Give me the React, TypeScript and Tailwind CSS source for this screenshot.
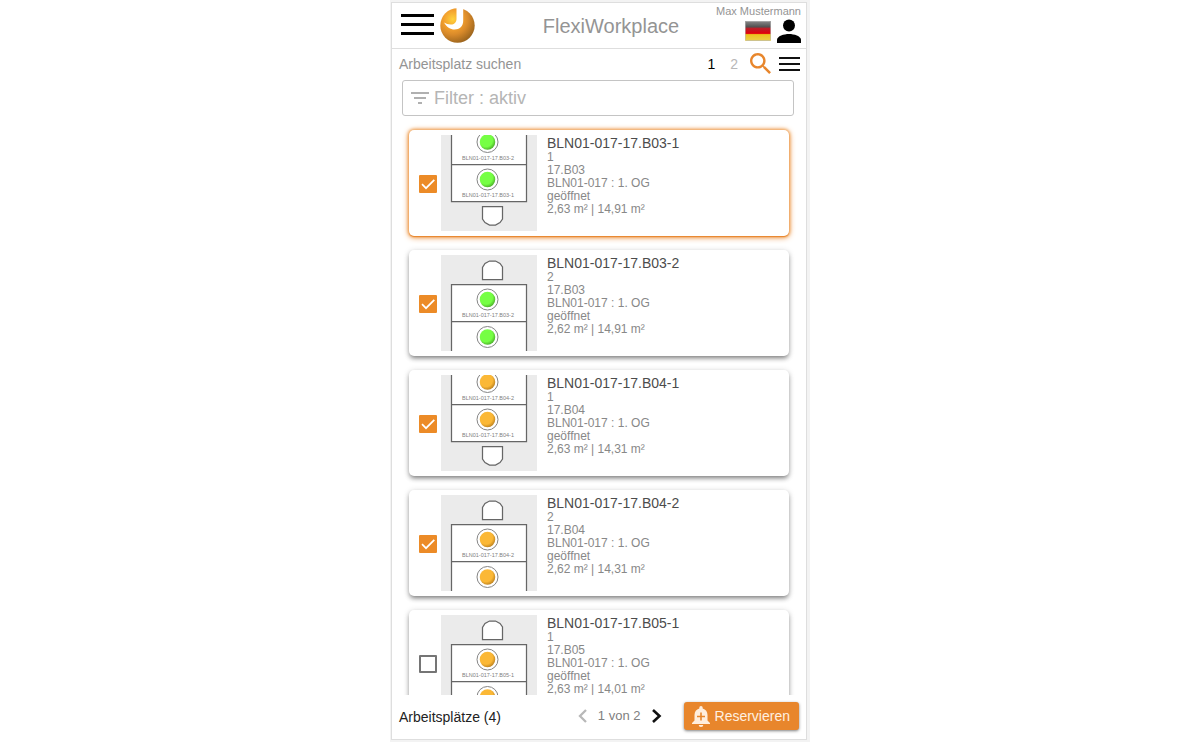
import { useState } from "react";

type Workplace = {
  id: string;
  seat: string;
  room: string;
  floor: string;
  status: string;
  area: string;
  chair: "top" | "bottom";
  free: boolean;
  labels: string[];
};

const workplaces: Workplace[] = [
  { id: "BLN01-017-17.B03-1", seat: "1", room: "17.B03", floor: "BLN01-017 : 1. OG", status: "geöffnet", area: "2,63 m² | 14,91 m²", chair: "bottom", free: true, labels: ["BLN01-017-17.B03-2", "BLN01-017-17.B03-1"] },
  { id: "BLN01-017-17.B03-2", seat: "2", room: "17.B03", floor: "BLN01-017 : 1. OG", status: "geöffnet", area: "2,62 m² | 14,91 m²", chair: "top", free: true, labels: ["BLN01-017-17.B03-2"] },
  { id: "BLN01-017-17.B04-1", seat: "1", room: "17.B04", floor: "BLN01-017 : 1. OG", status: "geöffnet", area: "2,63 m² | 14,31 m²", chair: "bottom", free: false, labels: ["BLN01-017-17.B04-2", "BLN01-017-17.B04-1"] },
  { id: "BLN01-017-17.B04-2", seat: "2", room: "17.B04", floor: "BLN01-017 : 1. OG", status: "geöffnet", area: "2,62 m² | 14,31 m²", chair: "top", free: false, labels: ["BLN01-017-17.B04-2"] },
  { id: "BLN01-017-17.B05-1", seat: "1", room: "17.B05", floor: "BLN01-017 : 1. OG", status: "geöffnet", area: "2,63 m² | 14,01 m²", chair: "top", free: false, labels: ["BLN01-017-17.B05-1"] },
];

function Logo() {
  return (
    <svg width="36" height="36" viewBox="0 0 36 36" aria-hidden="true">
      <defs>
        <radialGradient id="ball" cx="0.36" cy="0.32" r="0.75">
          <stop offset="0" stopColor="#ffd23c" />
          <stop offset="0.35" stopColor="#f3a02e" />
          <stop offset="0.6" stopColor="#d98a2a" />
          <stop offset="1" stopColor="#94601c" />
        </radialGradient>
      </defs>
      <circle cx="18.500" cy="17.500" r="17.200" fill="url(#ball)" />
      <path d="M17.500 0V11C17.500 14.500 15 16.500 12 16.500C9 16.500 7 15.800 5 14.500C7.500 19 11.500 21.500 15.500 21.500C20.500 21.500 24.200 18 24.200 13V0Z" fill="#fff" />
    </svg>
  );
}

function GermanFlag() {
  return (
    <svg width="26" height="20" viewBox="0 0 26 20" aria-hidden="true">
      <defs>
        <linearGradient id="flag" x1="0" y1="0" x2="0" y2="1">
          <stop offset="0" stopColor="#8a8a8a" />
          <stop offset="0.3" stopColor="#505050" />
          <stop offset="0.36" stopColor="#b8202a" />
          <stop offset="0.62" stopColor="#e2000c" />
          <stop offset="0.68" stopColor="#ecc41e" />
          <stop offset="1" stopColor="#ecd04c" />
        </linearGradient>
      </defs>
      <rect width="26" height="20" rx="1" fill="url(#flag)" />
      <rect x="0.500" y="0.500" width="25" height="19" rx="1" fill="none" stroke="#bbb" strokeOpacity="0.6" />
    </svg>
  );
}

function Desk({ y, free }: { y: number; free: boolean }) {
  return (
    <g>
      <circle cx="93" cy={y} r="21" fill="#fff" stroke="#858585" strokeWidth="2" />
      <circle cx="93" cy={y} r="15.500" fill={free ? "url(#green)" : "url(#amber)"} />
    </g>
  );
}

function FloorPlan({ place }: { place: Workplace }) {
  const below = place.chair === "bottom";
  const baselines = below ? [49, 123] : [123];
  return (
    <svg className="size-24 shrink-0" viewBox="0 0 192 192" role="img" aria-label={"Lageplan " + place.id}>
      <defs>
        <radialGradient id="green" cx="0.4" cy="0.38" r="0.65">
          <stop offset="0.65" stopColor="#76ff44" />
          <stop offset="1" stopColor="#4cae2a" />
        </radialGradient>
        <radialGradient id="amber" cx="0.4" cy="0.38" r="0.65">
          <stop offset="0.65" stopColor="#fbb836" />
          <stop offset="1" stopColor="#bd8220" />
        </radialGradient>
      </defs>
      <rect width="192" height="192" fill="#ebebeb" />
      <g fill="#fff" stroke="#666" strokeWidth="2.500">
        {below ? (
          <>
            <path d="M21 -5V133H171V-5M21 59H171" />
            <path d="M83 143H123V168L118 175L109 180H97L88 175L83 168Z" />
          </>
        ) : (
          <>
            <path d="M21 200V59H171V200M21 133H171" />
            <path d="M83 49H123V24L118 17L109 12H97L88 17L83 25Z" />
          </>
        )}
      </g>
      <Desk y={below ? 14 : 164} free={place.free} />
      <Desk y={89} free={place.free} />
      {place.labels.map((label, i) => (
        <text key={label} x="94" y={baselines[i]} textAnchor="middle" fontSize="11" fill="#808080">
          {label}
        </text>
      ))}
    </svg>
  );
}

function Card({ place, active, checked, onToggle }: { place: Workplace; active: boolean; checked: boolean; onToggle: () => void }) {
  return (
    <li
      className={
        active
          ? "flex h-[106px] shrink-0 items-center rounded-[5px] bg-white pl-2.5 shadow-[0_1px_1px_#e8862c,0_0_3px_1px_#f0a860,0_1px_6px_#e8862c]"
          : "flex h-[106px] shrink-0 items-center rounded-[5px] bg-white pl-2.5 shadow-[0_3px_5px_-1px_rgba(0,0,0,0.45),0_1px_6px_rgba(0,0,0,0.16)]"
      }
    >
      <span className="mt-0.5 mr-1 grid size-[18px] shrink-0">
        <input
          type="checkbox"
          id={place.id}
          checked={checked}
          onChange={onToggle}
          className="col-start-1 row-start-1 size-[18px] appearance-none rounded-[1px] border-2 border-[#757575] checked:border-[#ec8b27] checked:bg-[#ec8b27]"
        />
        {checked && (
          <svg className="pointer-events-none col-start-1 row-start-1" viewBox="0 0 18 18" fill="none" stroke="#fff" strokeWidth="1.700" aria-hidden="true">
            <path d="M3 9.200L7 13.200L15.300 4.900" />
          </svg>
        )}
      </span>
      <FloorPlan place={place} />
      <div className="self-start pt-[5px] pl-2.5 text-xs leading-[13px] text-[#888]">
        <label htmlFor={place.id} className="block text-sm leading-4 text-[#4c4c4c]">
          {place.id}
        </label>
        <p>{place.seat}</p>
        <p>{place.room}</p>
        <p>{place.floor}</p>
        <p>{place.status}</p>
        <p>{place.area}</p>
      </div>
    </li>
  );
}

export default function App() {
  const [selected, setSelected] = useState<string[]>(workplaces.slice(0, 4).map((p) => p.id));
  const toggle = (id: string) =>
    setSelected((s) => (s.includes(id) ? s.filter((x) => x !== id) : [...s, id]));

  return (
    <div className="mx-auto flex h-screen w-full max-w-[420px] flex-col bg-[#f3f3f3] pt-0.5 pr-[3px] pb-0.5 pl-px font-['Liberation_Sans',Arial,sans-serif]">
      <div className="flex min-h-0 flex-1 flex-col border border-[#dedede] bg-white">
        <header className="flex h-[46px] shrink-0 items-center justify-between border-b border-[#dedede] pr-[5px] pl-[9px]">
          <div className="flex flex-1 items-center gap-[5px]">
            <button type="button" aria-label="Menü">
              <svg width="33" height="24" viewBox="0 0 33 24" fill="#000" aria-hidden="true">
                <path d="M0 0h33v3H0zM0 9h33v3H0zM0 18h33v3H0z" />
              </svg>
            </button>
            <Logo />
          </div>
          <h1 className="ml-5 text-xl leading-6 text-[#949494]">FlexiWorkplace</h1>
          <div className="flex flex-1 flex-col items-end pb-0.5">
            <span className="text-[11px] leading-3 text-[#949494]">Max Mustermann</span>
            <span className="flex items-center gap-1.5">
              <button type="button" aria-label="Sprache: Deutsch">
                <GermanFlag />
              </button>
              <button type="button" aria-label="Profil">
                <svg width="24" height="28" viewBox="0 0 24 28" aria-hidden="true">
                  <circle cx="12" cy="8.500" r="6" fill="#000" />
                  <path d="M0 26v-3c0-4 7-6 12-6s12 2 12 6v3z" fill="#000" />
                </svg>
              </button>
            </span>
          </div>
        </header>

        <div className="flex h-[31px] shrink-0 items-center justify-between pr-[6px] pb-0.5 pl-[7px] text-sm">
          <h2 className="text-[#949494]">Arbeitsplatz suchen</h2>
          <nav className="flex items-center" aria-label="Ansicht">
            <button type="button" className="mr-[15px] text-black">1</button>
            <button type="button" className="mr-3 text-[#b8b8b8]">2</button>
            <button type="button" aria-label="Suchen" className="mr-2">
              <svg width="21" height="21" viewBox="3 3 17.500 17.500" fill="#e8862c" aria-hidden="true">
                <path d="M15.500 14h-.79l-.28-.27C15.410 12.590 16 11.110 16 9.500 16 5.910 13.090 3 9.500 3S3 5.910 3 9.500 5.910 16 9.500 16c1.610 0 3.090-.59 4.230-1.570l.27.28v.79l5 4.990L20.490 19l-4.990-5zm-6 0C7.010 14 5 11.990 5 9.500S7.010 5 9.500 5 14 7.010 14 9.500 11.990 14 9.500 14z" />
              </svg>
            </button>
            <button type="button" aria-label="Optionen">
              <svg width="21" height="14" viewBox="0 0 21 14" fill="#111" aria-hidden="true">
                <path d="M0 0h21v2H0zM0 6h21v2H0zM0 12h21v2H0z" />
              </svg>
            </button>
          </nav>
        </div>

        <label className="mr-3 ml-2.5 flex h-9 shrink-0 items-center gap-[5px] rounded-[3px] border border-[#c4c4c4] px-2">
          <svg width="18" height="12" viewBox="0 0 18 12" fill="#b0b0b0" aria-hidden="true">
            <path d="M0 0h18v2H0zM3 5h12v2H3zM7 10h4v2H7z" />
          </svg>
          <input
            type="text"
            aria-label="Filter"
            placeholder="Filter : aktiv"
            className="min-w-0 flex-1 text-lg leading-6 outline-none placeholder:text-[#b5b5b5]"
          />
        </label>

        <ul className="mt-1.5 flex min-h-0 flex-1 flex-col gap-3.5 overflow-y-auto px-[17px] pt-2 pb-2 [scrollbar-width:none]">
          {workplaces.map((place, i) => (
            <Card
              key={place.id}
              place={place}
              active={i === 0}
              checked={selected.includes(place.id)}
              onToggle={() => toggle(place.id)}
            />
          ))}
        </ul>

        <footer className="flex h-11 shrink-0 items-center justify-between px-[7px] pb-0.5">
          <span className="flex-1 pt-0.5 text-sm text-[#222]">Arbeitsplätze ({selected.length})</span>
          <nav className="mr-[22px] flex items-center gap-[11px] text-[13px] text-[#808080]" aria-label="Seiten">
            <button type="button" aria-label="Vorherige Seite">
              <svg width="10" height="14" viewBox="0 0 10 14" fill="none" stroke="#b8b8b8" strokeWidth="2.300" aria-hidden="true">
                <path d="M9 1L3 7l6 6" />
              </svg>
            </button>
            1 von 2
            <button type="button" aria-label="Nächste Seite">
              <svg width="10" height="14" viewBox="0 0 10 14" fill="none" stroke="#111" strokeWidth="2.600" aria-hidden="true">
                <path d="M1 1l6.500 6L1 13" />
              </svg>
            </button>
          </nav>
          <button
            type="button"
            className="flex h-7 items-center gap-1 rounded-[3px] bg-[#e8862c] pr-[9px] pl-[7px] text-sm text-[#fff0e0] shadow-[0_1px_3px_rgba(0,0,0,0.5)]"
          >
            <svg width="20" height="21" viewBox="0 0 19 21" aria-hidden="true">
              <path d="M7.800 1.800a1.700 1.700 0 0 1 3.400 0v.7c3 .8 4.800 3.300 4.800 6.500v5.500l2.500 2.500v1H.5v-1L3 14.500V9c0-3.200 1.800-5.700 4.800-6.500zM7.200 19h4.600a2.300 2 0 0 1-4.600 0z" fill="#ffeedd" />
              <path d="M9.500 6.500v8M5.500 10.500h8" stroke="#e8862c" strokeWidth="1.600" />
            </svg>
            Reservieren
          </button>
        </footer>
      </div>
    </div>
  );
}
